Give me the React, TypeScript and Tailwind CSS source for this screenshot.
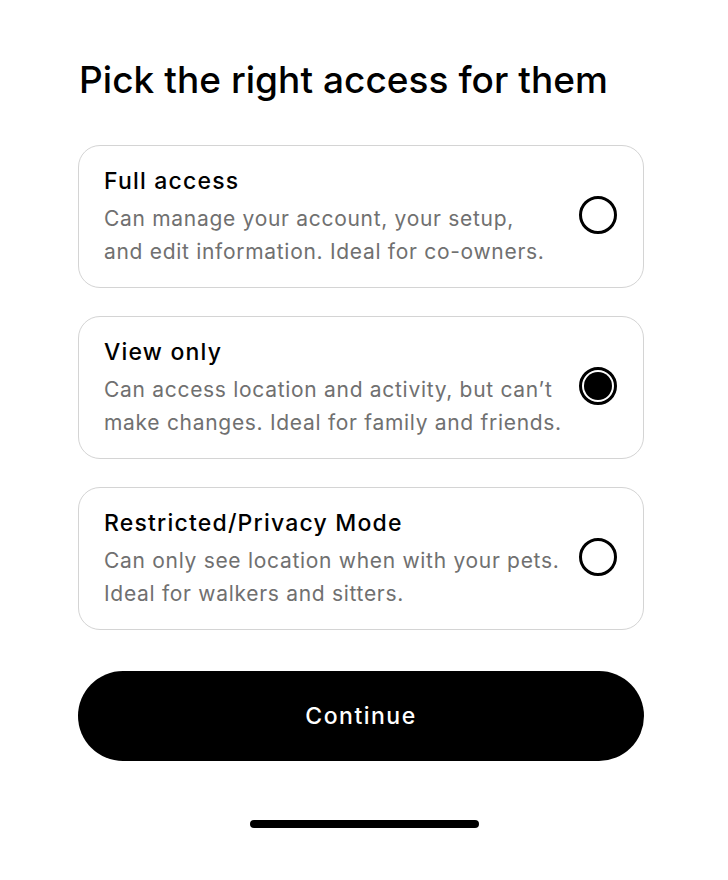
import { useState } from 'react';

const options = [
  {
    id: 'full',
    title: 'Full access',
    lines: ['Can manage your account, your setup,', 'and edit information. Ideal for co-owners.'],
  },
  {
    id: 'view',
    title: 'View only',
    lines: ['Can access location and activity, but can’t', 'make changes. Ideal for family and friends.'],
  },
  {
    id: 'restricted',
    title: 'Restricted/Privacy Mode',
    lines: ['Can only see location when with your pets.', 'Ideal for walkers and sitters.'],
  },
];

function Radio({ checked }: { checked: boolean }) {
  return (
    <div className="w-[38px] h-[38px] rounded-full border-[3px] border-black flex items-center justify-center flex-shrink-0 -mt-[3px]">
      {checked && <div className="w-[28px] h-[28px] rounded-full bg-black" />}
    </div>
  );
}

export default function App() {
  const [selected, setSelected] = useState('view');

  return (
    <div className="w-[728px] h-[880px] bg-white flex flex-col font-['Inter',sans-serif] text-black">
      <div className="pl-[78px] pr-[84px] pt-[58px]">
        <h1 className="text-[37px] leading-[44px] font-medium tracking-[0.05px] ml-[1px]">
          Pick the right access for them
        </h1>

        <div className="mt-[43px] flex flex-col gap-[28px]">
          {options.map((opt) => (
            <button
              key={opt.id}
              onClick={() => setSelected(opt.id)}
              className="w-full h-[143px] rounded-[22px] border-[1.5px] border-[#d4d4d4] pl-[25px] pr-[26px] flex items-center justify-between text-left"
            >
              <div>
                <div className="text-[23px] leading-[32px] font-medium tracking-[1.2px]">{opt.title}</div>
                <div className="mt-[5px] text-[21px] leading-[33px] text-[#707070] tracking-[0.7px]">
                  {opt.lines.map((l) => (
                    <div key={l}>{l}</div>
                  ))}
                </div>
              </div>
              <Radio checked={selected === opt.id} />
            </button>
          ))}
        </div>

        <button className="mt-[41px] w-full h-[90px] rounded-full bg-black text-white text-[23px] font-medium tracking-[1.5px] flex items-center justify-center">
          Continue
        </button>
      </div>

      <div className="mt-[59px] flex justify-center">
        <div className="w-[229px] h-[8px] rounded-full bg-black" />
      </div>
    </div>
  );
}
